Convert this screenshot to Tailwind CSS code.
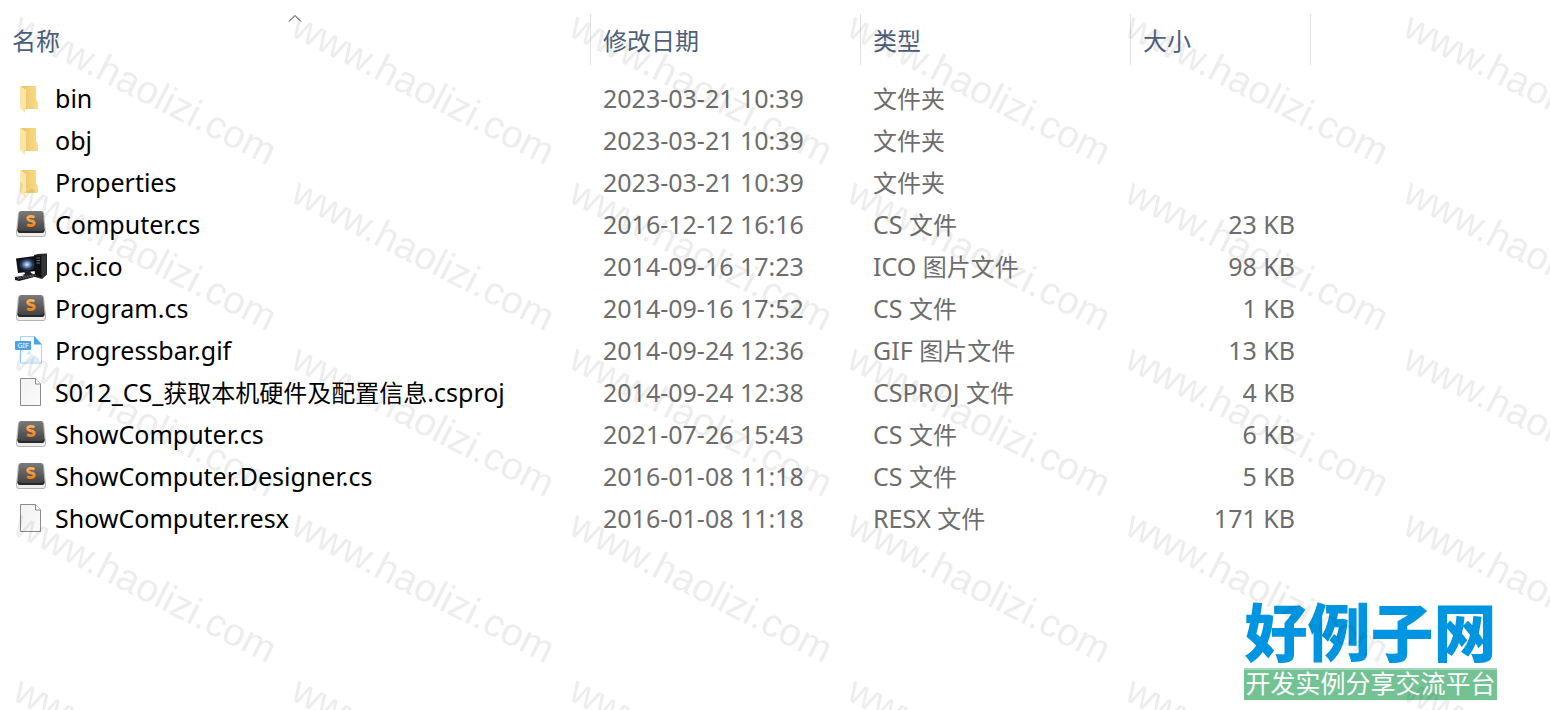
<!DOCTYPE html>
<html lang="zh-CN">

<head>
    <meta charset="UTF-8">
    <meta name="viewport" content="width=device-width, initial-scale=1.0">
    <title>文件列表</title>
    <script src="https://cdn.jsdelivr.net/npm/@tailwindcss/browser@4"></script>
</head>

<body class="bg-white font-['Noto_Sans','Noto_Sans_CJK_SC',sans-serif]">
    <!-- Icons -->
    <svg class="absolute size-0" aria-hidden="true" xmlns="http://www.w3.org/2000/svg">
        <defs>
            <linearGradient id="gFold" x1="0" x2="1" y1="0" y2="0">
                <stop offset="0" stop-color="#e9c469" />
                <stop offset="1" stop-color="#fbdc85" />
            </linearGradient>
            <linearGradient id="gKey" x1="0" x2="0" y1="0" y2="1">
                <stop offset="0" stop-color="#7b7b7b" />
                <stop offset="1" stop-color="#3e3e3e" />
            </linearGradient>
            <linearGradient id="gPage" x1="0" x2="1" y1="0" y2="1">
                <stop offset="0" stop-color="#f0f1f2" />
                <stop offset="1" stop-color="#fbfbfb" />
            </linearGradient>
            <linearGradient id="gSub" x1="0" x2="0" y1="0" y2="1">
                <stop offset="0" stop-color="#ffb054" />
                <stop offset="1" stop-color="#f5821f" />
            </linearGradient>
            <radialGradient id="gScreen" cx=".55" cy=".5" r=".5">
                <stop offset="0" stop-color="#e6f1ff" />
                <stop offset=".3" stop-color="#7f9dc4" />
                <stop offset=".65" stop-color="#2a3d60" />
                <stop offset="1" stop-color="#10141f" />
            </radialGradient>
        </defs>
        <symbol id="folder" viewBox="0 0 32 32">
            <path d="M6 3h15v13l2 4v6H10z" fill="url(#gFold)" />
            <path d="M5 3l6 4v17l-1 1v5l-5-5z" fill="#fde6a5" />
        </symbol>
        <symbol id="sublime" viewBox="0 0 32 32">
            <path d="M3 4Q4 2 6 2h20q2 0 3 2l2 20q0 4-3 4H4q-3 0-3-4z" fill="#b5b5b5" />
            <path d="M2 21h28v4q0 2-2 2H4q-2 0-2-2z" fill="#ededed" />
            <path d="M4 4q.5-2 2.500-2h19q2 0 2.500 2l1.500 17q0 3-3 3H5.500q-3 0-3-3z" fill="url(#gKey)" />
            <path d="M2.500 20q1 2 4 2h19q3 0 4-2v1q0 3-3 3h-21q-3 0-3-3z" fill="#292929" />
            <path d="M19.500 8.200q-2-1-4.200-.8-3 .3-2.500 2.600.3 1.300 3.200 1.800 3.600.6 3.300 2.800-.4 2-3.200 2-2.300 0-4-1" fill="none"
                stroke="url(#gSub)" stroke-width="2.800" />
        </symbol>
        <symbol id="pc" viewBox="0 0 32 32">
            <path d="M19 4l4-1 9-.5v21L27 28l-7-2z" fill="#25262a" />
            <path d="M20 4.500l6 .5v21l-6-1z" fill="#0e0f12" />
            <path d="M21.500 7h3.500M21.500 9.500h3.500M21.500 12h3.500" stroke="#6c6f78" />
            <path d="M27 5l4-1v19l-4 3z" fill="#34363b" />
            <path d="M1 7.500L20 5l1 15-18 2z" fill="#0c0d11" />
            <path d="M2.500 8.500L19 6.500l.8 12L4 20.500z" fill="url(#gScreen)" />
            <path d="M9 20l6-1 1 3 4 2-10 1-3-1 3-1z" fill="#202126" />
            <path d="M0 26l20-3 3 2-19 5-4-1z" fill="#17181b" />
            <path d="M2 26.500l17-2.500M3 28l18-3.500" stroke="#73757a" stroke-dasharray="1.500 1" />
        </symbol>
        <symbol id="gif" viewBox="0 0 32 32">
            <path d="M5.500 1.500h14l7 8v18.500h-21z" fill="#fbfdff" stroke="#a6d3f5" />
            <path d="M19 1l8 8.500h-8z" fill="#4ba4e8" />
            <circle cx="14" cy="18" r="1.800" fill="#cfe7fa" />
            <path d="M12 27q3-5 5-3 3-5 5-2 3 2 3 5z" fill="#d9edfb" />
            <rect y="6" width="16" height="9" rx="1" fill="#4ba4e8" />
            <text x="8" y="13" text-anchor="middle" font-size="7" fill="#fff">GIF</text>
        </symbol>
        <symbol id="page" viewBox="0 0 32 32">
            <path d="M5.500 1.500h15l5 5.500v21.500h-20z" fill="url(#gPage)" stroke="#8b8b8b" />
            <path d="M20.500 1.500V7h5" fill="#fff" stroke="#8b8b8b" />
        </symbol>
    </svg>

    <main class="relative min-h-screen overflow-hidden">
        <table class="w-full table-fixed border-collapse text-left text-[25px] leading-8 whitespace-nowrap">
            <colgroup>
                <col class="w-[591px]">
                <col class="w-[270px]">
                <col class="w-[270px]">
                <col class="w-[180px]">
                <col>
            </colgroup>
            <thead class="text-2xl text-[#4c607a]">
                <tr class="h-[77px] align-top">
                    <th class="relative p-0 pt-3.5 font-normal">
                        <svg class="absolute top-3.5 left-[288px] h-2 w-3.5" viewBox="0 0 14 8" fill="none" stroke="#333">
                            <path d="M1 7.500l6-6 6 6" />
                        </svg>
                        <div class="flex h-[51px] items-center border-r border-[#e2e2e2] pt-0.5 pl-3">名称</div>
                    </th>
                    <th class="p-0 pt-3.5 font-normal">
                        <div class="flex h-[51px] items-center border-r border-[#e2e2e2] pt-0.5 pl-3">修改日期</div>
                    </th>
                    <th class="p-0 pt-3.5 font-normal">
                        <div class="flex h-[51px] items-center border-r border-[#e2e2e2] pt-0.5 pl-3">类型</div>
                    </th>
                    <th class="p-0 pt-3.5 font-normal">
                        <div class="flex h-[51px] items-center border-r border-[#e2e2e2] pt-0.5 pl-3">大小</div>
                    </th>
                    <td></td>
                </tr>
            </thead>
            <tbody id="fileList" class="text-[#6d6d6d]"></tbody>
        </table>

        <!-- Site logo -->
        <div class="absolute right-[53px] bottom-2.5 w-[253px] font-['Noto_Sans_CJK_SC',sans-serif] whitespace-nowrap">
            <div class="pb-2 text-center text-[63px] leading-none font-black text-[#0095e0]">好例子网</div>
            <div class="flex h-8 items-center justify-center border-t-2 border-[#a5d6bb] bg-[#72c293] pb-1.5 text-[25px] leading-none text-white">开发实例分享交流平台</div>
        </div>

        <!-- Watermark -->
        <svg class="pointer-events-none absolute inset-0 h-full w-full" aria-hidden="true">
            <defs>
                <pattern id="mark" width="278" height="166" patternUnits="userSpaceOnUse">
                    <text transform="translate(11 35) rotate(27)" class="font-['Liberation_Sans',sans-serif]"
                        font-size="39" fill="#000" fill-opacity=".07">www.haolizi.com</text>
                </pattern>
            </defs>
            <rect width="100%" height="100%" fill="url(#mark)" />
        </svg>
    </main>

    <script>
        const files = [
            ['folder', 'bin', '2023-03-21 10:39', '文件夹', ''],
            ['folder', 'obj', '2023-03-21 10:39', '文件夹', ''],
            ['folder', 'Properties', '2023-03-21 10:39', '文件夹', ''],
            ['sublime', 'Computer.cs', '2016-12-12 16:16', 'CS 文件', '23 KB'],
            ['pc', 'pc.ico', '2014-09-16 17:23', 'ICO 图片文件', '98 KB'],
            ['sublime', 'Program.cs', '2014-09-16 17:52', 'CS 文件', '1 KB'],
            ['gif', 'Progressbar.gif', '2014-09-24 12:36', 'GIF 图片文件', '13 KB'],
            ['page', 'S012_CS_获取本机硬件及配置信息.csproj', '2014-09-24 12:38', 'CSPROJ 文件', '4 KB'],
            ['sublime', 'ShowComputer.cs', '2021-07-26 15:43', 'CS 文件', '6 KB'],
            ['sublime', 'ShowComputer.Designer.cs', '2016-01-08 11:18', 'CS 文件', '5 KB'],
            ['page', 'ShowComputer.resx', '2016-01-08 11:18', 'RESX 文件', '171 KB'],
        ];

        // Chinese runs are set one size smaller than the latin text
        const mixed = (text) => text.replace(/[\u4e00-\u9fff]+/g, '<span class="text-2xl leading-none">$&</span>');

        document.getElementById('fileList').innerHTML = files.map(([icon, name, date, type, size]) => `
            <tr class="h-[42px]">
                <td class="p-0 pl-[15px] text-black">
                    <div class="flex items-center gap-2">
                        <svg class="mt-0.5 size-8 shrink-0"><use href="#${icon}"></use></svg>
                        <span>${mixed(name)}</span>
                    </div>
                </td>
                <td class="p-0 pl-3">${date}</td>
                <td class="p-0 pl-3">${mixed(type)}</td>
                <td class="p-0 pr-4 text-right">${size}</td>
                <td></td>
            </tr>`).join('');
    </script>
</body>

</html>
